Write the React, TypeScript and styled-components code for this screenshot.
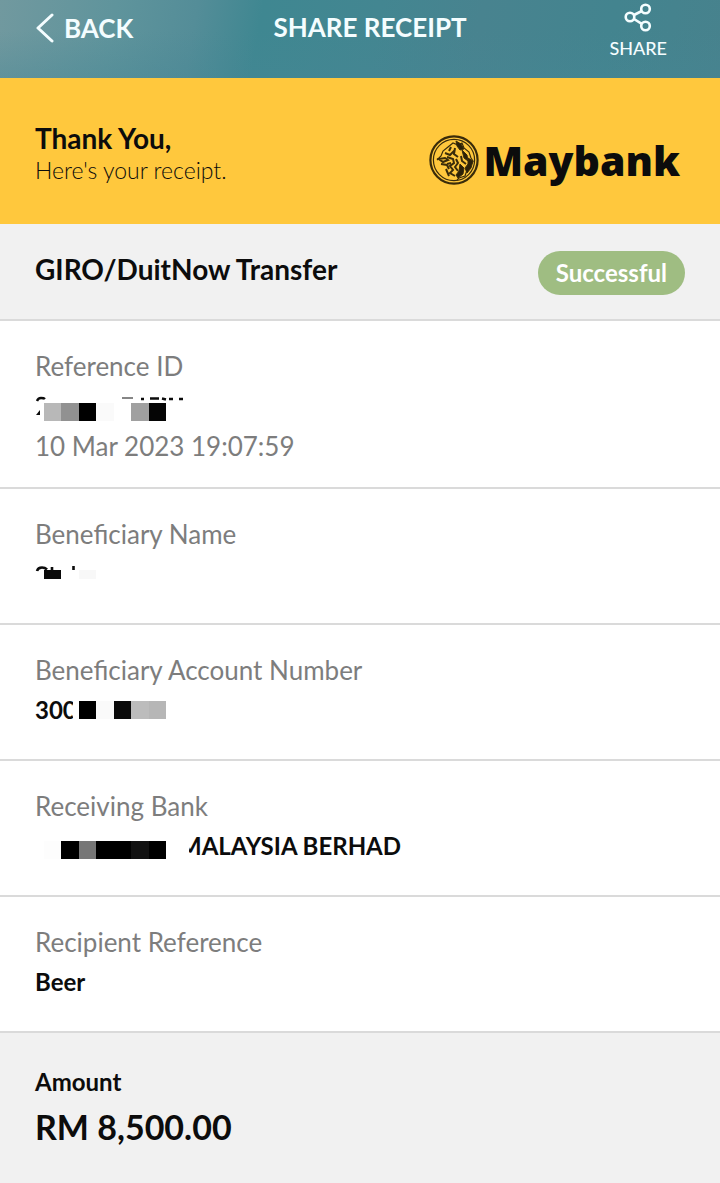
import React from 'react';
import styled, { createGlobalStyle, css } from 'styled-components';

const GlobalStyle = createGlobalStyle`
  *, *::before, *::after { box-sizing: border-box; }
  html, body { margin: 0; background: #f1f1f1; }
  body { font-family: Lato, "Liberation Sans", sans-serif; color: #0c0c0c; }
`;

const Page = styled.main`
  display: flex;
  flex-direction: column;
  min-height: 100vh;
`;

const TopBar = styled.header`
  display: grid;
  grid-template-columns: 1fr auto 1fr;
  align-items: start;
  height: 78px;
  padding: 0 16px 0 36px;
  color: #f4fdff;
  background:
    linear-gradient(to bottom, rgba(70, 134, 148, 0) 40%, rgba(70, 134, 148, 0.35)),
    linear-gradient(100deg, #71999f 0%, #5f949c 16%, #548d98 27%, #3f8791 36%, #438691 52%, #48838f 66%, #43848f 84%, #47828d 100%);
`;

const barButton = css`
  display: flex;
  align-items: center;
  border: 0;
  padding: 0;
  background: none;
  color: inherit;
  font-family: inherit;
  cursor: pointer;
`;

const BackButton = styled.button`
  ${barButton}
  justify-self: start;
  gap: 10px;
  height: 55px;
  font-size: 26px;
  font-weight: 700;
`;

const BarTitle = styled.h1`
  margin: 0;
  font-size: 26px;
  font-weight: 700;
  line-height: 54px;
`;

const ShareButton = styled.button`
  ${barButton}
  flex-direction: column;
  justify-self: end;
  gap: 4px;
  padding: 3px 37px 0;
  font-size: 18px;
  font-weight: 500;
  line-height: 24px;
`;

const Banner = styled.section`
  display: flex;
  align-items: center;
  justify-content: space-between;
  height: 146px;
  padding: 6px 40px 0 35px;
  background: #ffc83d;
`;

const Thanks = styled.h2`
  margin: 0;
  font-size: 28px;
  font-weight: 700;
  line-height: 32px;
`;

const ThanksNote = styled.p`
  margin: 0;
  font-size: 23px;
  font-weight: 300;
  line-height: 32px;
`;

const Brand = styled.div`
  display: flex;
  align-items: center;
  gap: 4px;
  padding-top: 12px;
`;

const BrandName = styled.span`
  font-family: "Open Sans", "Noto Sans", sans-serif;
  font-size: 41px;
  font-weight: 800;
  line-height: 50px;
`;

const TransferBar = styled.section`
  display: flex;
  align-items: center;
  justify-content: space-between;
  height: 97px;
  padding: 0 35px;
  background: #f1f1f1;
  border-bottom: 2px solid #dadada;
`;

const TransferTitle = styled.h2`
  margin: 0;
  padding-bottom: 6px;
  font-size: 28px;
  font-weight: 700;
  line-height: 36px;
`;

const Status = styled.span`
  margin-top: 2px;
  padding: 0 18px;
  border-radius: 22px;
  background: #9fbd82;
  color: #fff;
  font-size: 24px;
  font-weight: 700;
  line-height: 44px;
`;

const Details = styled.dl`
  margin: 0;
  background: #fff;
`;

const Detail = styled.div`
  min-height: 136px;
  padding: 25px 35px 21px;
  border-bottom: 2px solid #dadada;
`;

const Label = styled.dt`
  color: #7d7d7d;
  font-size: 26px;
  line-height: 40px;
`;

const Value = styled.dd<{ $muted?: boolean }>`
  display: flex;
  height: 40px;
  margin: 0;
  color: ${p => (p.$muted ? '#7d7d7d' : '#0c0c0c')};
  font-size: ${p => (p.$muted ? 26 : 24)}px;
  font-weight: ${p => (p.$muted ? 400 : 700)};
  line-height: 40px;
  white-space: nowrap;
`;

const Partial = styled.span<{ $shape: string }>`
  clip-path: ${p => p.$shape};
`;

const Total = styled.section`
  flex: 1;
  padding: 29px 35px 24px;
  background: #f1f1f1;
`;

const TotalLabel = styled.h3`
  margin: 0;
  font-size: 24px;
  font-weight: 700;
  line-height: 40px;
`;

const TotalValue = styled.p`
  margin: 0;
  font-size: 34px;
  font-weight: 700;
  line-height: 50px;
`;

type Block = [x: number, y: number, w: number, h: number, fill: string];

function Mosaic({ width, blocks, children }: { width: number; blocks: Block[]; children?: React.ReactNode }) {
  return (
    <svg width={width} height="40" viewBox={`0 0 ${width} 40`} aria-hidden="true" shapeRendering="crispEdges">
      {blocks.map(([x, y, w, h, fill]) => (
        <rect key={x} x={x} y={y} width={w} height={h} fill={fill} />
      ))}
      {children}
    </svg>
  );
}

function Tiger() {
  return (
    <svg width="50" height="50" viewBox="0 0 50 50" fill="none" stroke="#3a2c0a" aria-hidden="true">
      <circle cx="25" cy="25" r="23.6" strokeWidth="2.2" />
      <circle cx="25" cy="25" r="20.6" strokeWidth="1.2" />
      <path d="M8 25l4-4 2-5 5-4 5-4 5 2 4-2 2 5 5 4 2 6 2 3-3 6-3 3-2 6-6 2-2 2" strokeWidth="1.2" />
      <path d="M27 6l5 3 3 5-4 1-3-4zM33 15l5 5 1 6-4-3zM39 23l5 3-2 7-4 5-2-5 3-4zM31 29l4 4-1 6-5 4-2-3 3-4z" fill="#2b2108" strokeWidth="1" />
      <path d="M10 24l6-1 3 2-5 2zM12 29l6 1 2 4M16 18l5 2 4-4M22 12l-2 4M26 13l-1 6 4 3M18 22l6 2 1 4-4 3 3 4-3 3 5 3M27 24l2 4-3 4 3 4M32 21l1 5 4 3M17 34l3 7M22 28l-4 1" strokeWidth="2" />
    </svg>
  );
}

export default function App() {
  return (
    <>
      <GlobalStyle />
      <Page>
        <TopBar>
          <BackButton type="button">
            <svg width="18" height="30" viewBox="0 0 18 30" fill="none" stroke="currentColor" strokeWidth="3" strokeLinecap="round" strokeLinejoin="round" aria-hidden="true">
              <path d="M16 2L2 15l14 13" />
            </svg>
            BACK
          </BackButton>
          <BarTitle>SHARE RECEIPT</BarTitle>
          <ShareButton type="button">
            <svg width="28" height="29" viewBox="0 0 28 29" fill="none" stroke="currentColor" strokeWidth="2.6" aria-hidden="true">
              <circle cx="6" cy="14" r="4.3" />
              <circle cx="21.5" cy="6" r="4.3" />
              <circle cx="21.5" cy="23" r="4.3" />
              <path d="M10 12l7.8-4M10 16l7.8 4.8" />
            </svg>
            SHARE
          </ShareButton>
        </TopBar>

        <Banner>
          <div>
            <Thanks>Thank You,</Thanks>
            <ThanksNote>Here's your receipt.</ThanksNote>
          </div>
          <Brand>
            <Tiger />
            <BrandName>Maybank</BrandName>
          </Brand>
        </Banner>

        <TransferBar>
          <TransferTitle>GIRO/DuitNow Transfer</TransferTitle>
          <Status>Successful</Status>
        </TransferBar>

        <Details>
          <Detail>
            <Label>Reference ID</Label>
            <Value>
              <Mosaic
                width={150}
                blocks={[
                  [9, 17, 17, 18, '#b8b8b8'],
                  [26, 17, 18, 18, '#919191'],
                  [44, 17, 17, 18, '#000'],
                  [61, 17, 18, 18, '#fafafa'],
                  [96, 17, 18, 18, '#a0a0a0'],
                  [114, 17, 17, 18, '#050505'],
                ]}
              >
                <g fill="none" stroke="#0c0c0c" shapeRendering="auto">
                  <path d="M2 15q1-3 4-3 3 0 4 1" strokeWidth="2.4" />
                  <path d="M1 29l4-5v5z" fill="#0c0c0c" stroke="none" />
                  <path d="M87 12h11" strokeWidth="1" />
                  <path d="M106 13h3M115 12.500h9M127 12.500l4 1M134 13h4M144 13h4" strokeWidth="2.4" />
                </g>
              </Mosaic>
            </Value>
            <Value $muted>10 Mar 2023 19:07:59</Value>
          </Detail>
          <Detail>
            <Label>Beneficiary Name</Label>
            <Value>
              <Mosaic
                width={70}
                blocks={[
                  [9, 16, 17, 9, '#0a0a0a'],
                  [44, 16, 17, 9, '#f8f8f8'],
                ]}
              >
                <g fill="none" stroke="#0c0c0c" strokeWidth="2.6" shapeRendering="auto">
                  <path d="M2 17q1-3.500 5-3.500 3 0 5 2M17 13v4M38.500 12v4" />
                </g>
              </Mosaic>
            </Value>
          </Detail>
          <Detail>
            <Label>Beneficiary Account Number</Label>
            <Value>
              <Partial $shape="polygon(0 0, 38px 0, 38px 14px, 35px 20px, 38px 27px, 38px 100%, 0 100%)">300</Partial>
              <Mosaic
                width={100}
                blocks={[
                  [2, 11, 17, 18, '#000'],
                  [19, 11, 18, 18, '#fafafa'],
                  [37, 11, 17, 18, '#0a0a0a'],
                  [54, 11, 18, 18, '#bcbcbc'],
                  [72, 11, 17, 18, '#b6b6b6'],
                ]}
              />
            </Value>
          </Detail>
          <Detail>
            <Label>Receiving Bank</Label>
            <Value>
              <Mosaic
                width={144}
                blocks={[
                  [9, 15, 17, 18, '#fdfdfd'],
                  [26, 15, 18, 18, '#000'],
                  [44, 15, 17, 18, '#777'],
                  [61, 15, 35, 18, '#000'],
                  [96, 15, 18, 18, '#111'],
                  [114, 15, 17, 18, '#000'],
                ]}
              />
              <Partial $shape="polygon(18px 0, 100% 0, 100% 100%, 10px 100%, 10px 24px)">MALAYSIA BERHAD</Partial>
            </Value>
          </Detail>
          <Detail>
            <Label>Recipient Reference</Label>
            <Value>Beer</Value>
          </Detail>
        </Details>

        <Total>
          <TotalLabel>Amount</TotalLabel>
          <TotalValue>RM 8,500.00</TotalValue>
        </Total>
      </Page>
    </>
  );
}
